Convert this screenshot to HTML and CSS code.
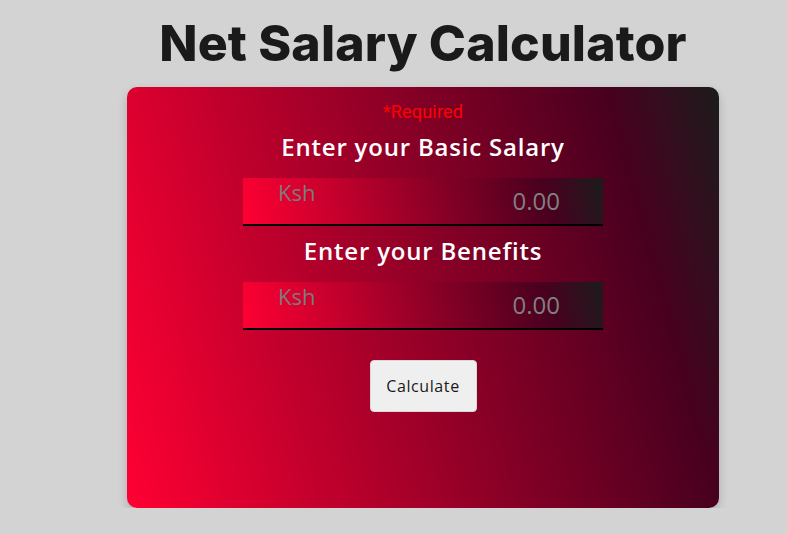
FILE: index.html
```html
<!DOCTYPE html>
<html lang="en">
<head>
<meta charset="utf-8">
<title>Net Salary Calculator</title>
<link rel="stylesheet" href="styles.css">
</head>
<body>
<main class="page">
  <h1 class="title">Net Salary Calculator</h1>
  <section class="card">
    <p class="required">*Required</p>
    <h2 class="label">Enter your Basic Salary</h2>
    <div class="field">
      <span class="currency">Ksh</span>
      <input class="amount" type="text" placeholder="0.00">
    </div>
    <h2 class="label">Enter your Benefits</h2>
    <div class="field">
      <span class="currency">Ksh</span>
      <input class="amount" type="text" placeholder="0.00">
    </div>
    <button class="calc" type="button">Calculate</button>
  </section>
</main>
</body>
</html>
```
FILE: styles.css
```css
html, body {
  margin: 0;
  padding: 0;
  background: #d3d3d3;
  overflow: hidden;
}
.page {
  width: 787px;
  box-sizing: border-box;
  padding-left: 59px;
  display: flex;
  flex-direction: column;
  align-items: center;
}
.title {
  margin: 14px 0 0;
  font-family: "Inter", sans-serif;
  font-weight: 800;
  font-size: 50px;
  line-height: 58px;
  letter-spacing: 0.15px;
  color: #1a1a1a;
}
.card {
  margin-top: 15px;
  width: 592px;
  height: 421px;
  box-sizing: border-box;
  border-radius: 10px;
  background: linear-gradient(75deg, #ff0033 0%, #48001f 84%, #1c1c1c 100%);
  box-shadow: 0 4px 10px rgba(0, 0, 0, 0.18);
  display: flex;
  flex-direction: column;
  align-items: center;
  padding-top: 15px;
}
.required {
  margin: 0;
  font-family: "Roboto", sans-serif;
  font-size: 18px;
  line-height: 20px;
  letter-spacing: 0.2px;
  color: #ff0000;
}
.label {
  margin: 10px 0 0;
  font-family: "Open Sans", sans-serif;
  font-weight: 600;
  font-size: 24px;
  line-height: 30px;
  letter-spacing: 0.8px;
  color: #ffffff;
}
.field {
  width: 360px;
  height: 48px;
  box-sizing: border-box;
  margin-top: 16px;
  display: flex;
  justify-content: space-between;
  padding: 0 43px 0 35px;
  background: linear-gradient(75deg, #ff0033 0%, #48001f 84%, #1c1c1c 100%);
  border-bottom: 2px solid #000;
}
.currency {
  font-family: "Open Sans", sans-serif;
  font-size: 22px;
  line-height: 28px;
  color: #7b7b7b;
}
.amount {
  align-self: flex-end;
  width: 150px;
  margin-bottom: 7px;
  padding: 0;
  border: none;
  background: transparent;
  text-align: right;
  font-family: "Open Sans", sans-serif;
  font-size: 24px;
  line-height: 32px;
  color: #fff;
  outline: none;
}
.amount::placeholder {
  color: #808080;
}
.calc {
  margin-top: 30px;
  width: 107px;
  height: 52px;
  border: 1px solid #d8d8d8;
  border-radius: 4px;
  background: #efefef;
  font-family: "Open Sans", sans-serif;
  font-size: 16px;
  letter-spacing: 0.6px;
  color: #1a1a1a;
}
```
